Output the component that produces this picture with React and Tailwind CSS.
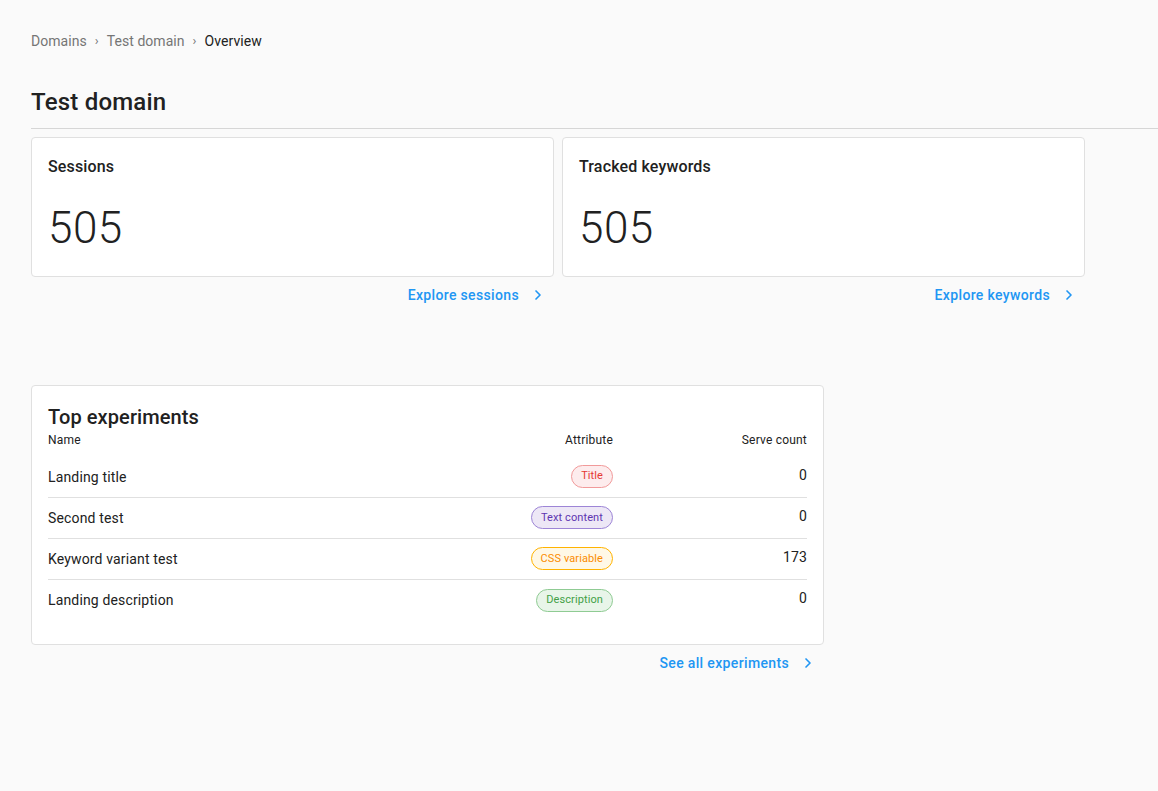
import { ChevronRight } from 'lucide-react';

const experiments = [
  { name: 'Landing title', attr: 'Title', tone: 'red', count: 0 },
  { name: 'Second test', attr: 'Text content', tone: 'purple', count: 0 },
  { name: 'Keyword variant test', attr: 'CSS variable', tone: 'orange', count: 173 },
  { name: 'Landing description', attr: 'Description', tone: 'green', count: 0 },
];

const chipTones = {
  red: 'bg-[#fdeced] border-[#f19a9a] text-[#e53935]',
  purple: 'bg-[#ede7f6] border-[#9d85d6] text-[#5e35b1]',
  orange: 'bg-[#fff8e6] border-[#ffb300] text-[#fb8c00]',
  green: 'bg-[#e8f5e9] border-[#8fcb93] text-[#43a047]',
};

function MoreLink({ label }) {
  return (
    <div className="flex justify-end">
      <a className="flex items-center gap-[11px] h-[36px] px-2 text-[14px] font-medium tracking-[0.35px] text-[#2196f3] cursor-pointer">
        {label}
        <ChevronRight size={16} strokeWidth={2.5} />
      </a>
    </div>
  );
}

function StatCard({ title, value, link }) {
  return (
    <div>
      <div className="h-[140px] bg-white border border-[#e0e0e0] rounded-[4px] px-4 pt-[17px]">
        <div className="text-[16px] font-medium tracking-[0.15px] text-[#212121]">{title}</div>
        <div className="mt-[27px] text-[44px] font-light leading-none text-[#212121] tracking-[0.5px]">{value}</div>
      </div>
      <MoreLink label={link} />
    </div>
  );
}

export default function App() {
  return (
    <div className="min-h-screen bg-[#fafafa] text-[#212121] font-['Roboto','Liberation_Sans',sans-serif] pl-[31px] pt-[31px]">
      <nav className="flex items-center text-[14px] h-[20px] tracking-[0.05px]">
        <span className="text-[#757575]">Domains</span>
        <span className="mx-[8px] text-[#757575] text-[13px]">›</span>
        <span className="text-[#757575]">Test domain</span>
        <span className="mx-[8px] text-[#757575] text-[13px]">›</span>
        <span className="text-[#212121]">Overview</span>
      </nav>
      <h1 className="mt-[36px] text-[24px] font-medium leading-[30px] tracking-[0.2px] text-[#212121]">Test domain</h1>
      <div className="mt-[11px] border-b border-[#d6d6d6]" />
      <div className="mt-[8px] w-[1054px] grid grid-cols-2 gap-[8px]">
        <StatCard title="Sessions" value="505" link="Explore sessions" />
        <StatCard title="Tracked keywords" value="505" link="Explore keywords" />
      </div>
      <div className="mt-[72px] w-[793px]">
        <div className="bg-white border border-[#e0e0e0] rounded-[4px] px-4 pt-[18px] pb-[24px]">
          <h2 className="text-[20px] font-medium leading-[26px] tracking-[0.1px] text-[#212121]">Top experiments</h2>
          <table className="w-full text-[14px] tracking-[0.15px]">
            <thead>
              <tr className="text-[12px] text-[#212121] tracking-[0.2px]">
                <th className="text-left font-normal pt-[1px] pb-[7px]">Name</th>
                <th className="text-right font-normal pt-[1px] pb-[7px]">Attribute</th>
                <th className="text-right font-normal pt-[1px] pb-[7px] w-[194px]">Serve count</th>
              </tr>
            </thead>
            <tbody>
              {experiments.map((e, i) => (
                <tr key={e.name} className={i < experiments.length - 1 ? 'border-b border-[#e0e0e0]' : ''}>
                  <td className="h-[41px] pt-[2px]">{e.name}</td>
                  <td className="h-[41px] text-right">
                    <span className={`inline-flex items-center h-[23px] px-[9px] rounded-full border text-[11px] tracking-[0.1px] ${chipTones[e.tone]}`}>
                      {e.attr}
                    </span>
                  </td>
                  <td className="h-[41px] text-right align-middle pb-[2px]">{e.count}</td>
                </tr>
              ))}
            </tbody>
          </table>
        </div>
        <MoreLink label="See all experiments" />
      </div>
    </div>
  );
}
